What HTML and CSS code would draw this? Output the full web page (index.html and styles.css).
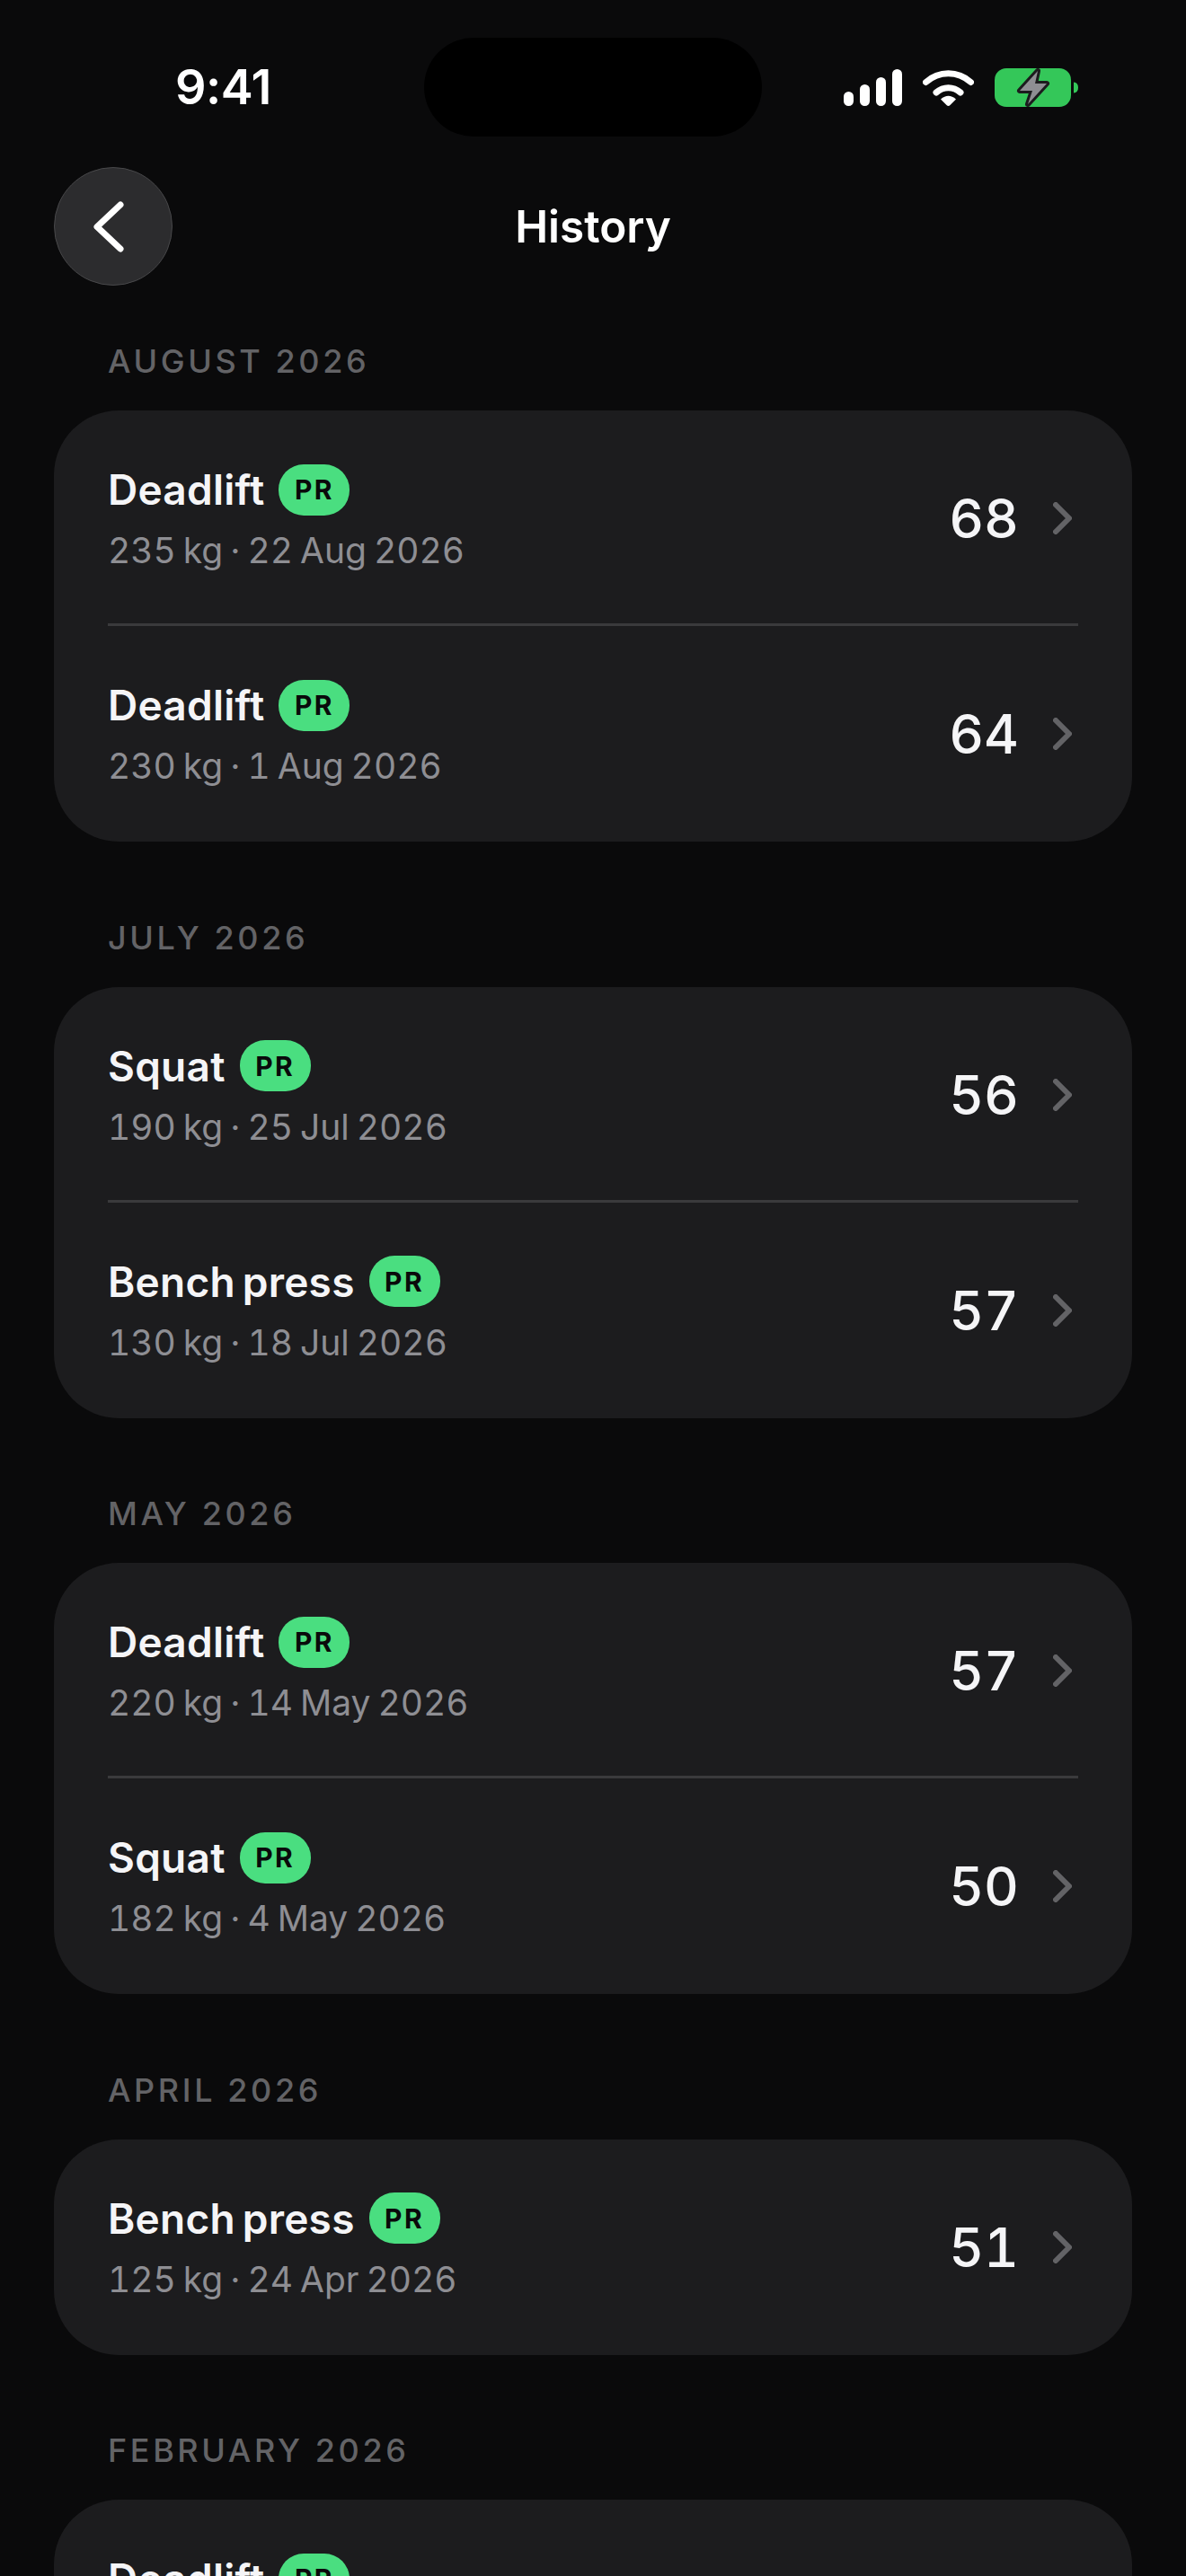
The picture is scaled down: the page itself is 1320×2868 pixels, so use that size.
FILE: index.html
```html
<!DOCTYPE html>
<html lang="en">
<head>
<meta charset="utf-8">
<title>History</title>
<link rel="stylesheet" href="styles.css">
</head>
<body>
<main class="screen">
  <div class="island"></div>
  <header class="status">
    <span class="time">9:41</span>
    <div class="status-icons">
      <svg class="signal" viewBox="0 0 65 41"><rect x="0" y="25" width="11" height="16" rx="5.5"/><rect x="18" y="17" width="11" height="24" rx="5.5"/><rect x="36" y="9" width="11" height="32" rx="5.5"/><rect x="54" y="0" width="11" height="41" rx="5.5"/></svg>
      <svg class="wifi" viewBox="0 0 57 42"><path d="M3.5 15.5C18 2.5 39 2.5 53.5 15.5" fill="none" stroke="#fff" stroke-width="7" stroke-linecap="round"/><path d="M15 27C23 20 34 20 42 27" fill="none" stroke="#fff" stroke-width="7" stroke-linecap="round"/><path d="M20 34.500Q28.500 27 37 34.500L30.500 41Q28.500 43 26.500 41Z" fill="#fff"/></svg>
      <svg class="battery" viewBox="0 0 93 45"><rect x="0" y="1" width="85" height="43" rx="13" fill="#34c759"/><path d="M88 16.500Q93 17 93 22.500Q93 28 88 28.500Z" fill="#34c759"/><path class="bolt" d="M48 4L28 26H42L37 41L58 18H45Z"/></svg>
    </div>
  </header>
  <nav class="nav">
    <button class="back" aria-label="Back"><svg viewBox="0 0 34 57"><path d="M30 4L4 28.500L30 53" fill="none" stroke="#fff" stroke-width="7" stroke-linecap="round" stroke-linejoin="round"/></svg></button>
    <h1 class="title">History</h1>
  </nav>

  <section class="group first">
    <h2 class="month">AUGUST 2026</h2>
    <div class="card">
      <a class="row"><div class="info"><div class="name">Deadlift <span class="pr">PR</span></div><div class="sub">235 kg · 22 Aug 2026</div></div><span class="value">68</span><svg class="chev" viewBox="0 0 21 36"><path d="M3 3L18 18L3 33"/></svg></a>
      <a class="row"><div class="info"><div class="name">Deadlift <span class="pr">PR</span></div><div class="sub">230 kg · 1 Aug 2026</div></div><span class="value">64</span><svg class="chev" viewBox="0 0 21 36"><path d="M3 3L18 18L3 33"/></svg></a>
    </div>
  </section>
  <section class="group">
    <h2 class="month">JULY 2026</h2>
    <div class="card">
      <a class="row"><div class="info"><div class="name">Squat <span class="pr">PR</span></div><div class="sub">190 kg · 25 Jul 2026</div></div><span class="value">56</span><svg class="chev" viewBox="0 0 21 36"><path d="M3 3L18 18L3 33"/></svg></a>
      <a class="row"><div class="info"><div class="name">Bench press <span class="pr">PR</span></div><div class="sub">130 kg · 18 Jul 2026</div></div><span class="value">57</span><svg class="chev" viewBox="0 0 21 36"><path d="M3 3L18 18L3 33"/></svg></a>
    </div>
  </section>
  <section class="group">
    <h2 class="month">MAY 2026</h2>
    <div class="card">
      <a class="row"><div class="info"><div class="name">Deadlift <span class="pr">PR</span></div><div class="sub">220 kg · 14 May 2026</div></div><span class="value">57</span><svg class="chev" viewBox="0 0 21 36"><path d="M3 3L18 18L3 33"/></svg></a>
      <a class="row"><div class="info"><div class="name">Squat <span class="pr">PR</span></div><div class="sub">182 kg · 4 May 2026</div></div><span class="value">50</span><svg class="chev" viewBox="0 0 21 36"><path d="M3 3L18 18L3 33"/></svg></a>
    </div>
  </section>
  <section class="group">
    <h2 class="month">APRIL 2026</h2>
    <div class="card">
      <a class="row"><div class="info"><div class="name">Bench press <span class="pr">PR</span></div><div class="sub">125 kg · 24 Apr 2026</div></div><span class="value">51</span><svg class="chev" viewBox="0 0 21 36"><path d="M3 3L18 18L3 33"/></svg></a>
    </div>
  </section>
  <section class="group">
    <h2 class="month">FEBRUARY 2026</h2>
    <div class="card">
      <a class="row"><div class="info"><div class="name">Deadlift <span class="pr">PR</span></div><div class="sub"></div></div></a>
    </div>
  </section>
</main>
</body>
</html>
```

FILE: styles.css
```css
* { box-sizing: border-box; margin: 0; padding: 0; }
html, body { background: #0a0a0b; }
body { height: 2868px; overflow: hidden; font-family: Inter, "Liberation Sans", sans-serif; color: #f5f5f7; }
.screen { position: relative; width: 1320px; height: 2868px; overflow: hidden; padding: 0 60px; }
.island { position: absolute; left: 472px; top: 42px; width: 376px; height: 110px; border-radius: 55px; background: #000; }
.status { display: flex; justify-content: space-between; align-items: center; height: 150px; padding: 44px 60px 0 135px; }
.time { font-size: 54px; font-weight: 600; line-height: 56px; letter-spacing: -0.5px; color: #fff; }
.status-icons { display: flex; align-items: center; gap: 23px; }
.signal { width: 65px; height: 41px; fill: #fff; }
.wifi { width: 57px; height: 42px; }
.battery { width: 93px; height: 45px; }
.bolt { fill: #8e8e93; stroke: #1c1c1e; stroke-width: 6px; stroke-linejoin: round; paint-order: stroke; }
.nav { position: relative; display: flex; align-items: center; height: 132px; margin-top: 36px; }
.back { width: 132px; height: 132px; border-radius: 50%; background: #2c2c2e; border: 1.500px solid #48484a; display: flex; align-items: center; justify-content: center; }
.back svg { width: 34px; height: 57px; margin-right: 10px; }
.title { position: absolute; left: 0; right: 0; text-align: center; font-size: 49.5px; font-weight: 600; color: #fff; pointer-events: none; }
.group { margin-top: 84.5px; }
.group.first { margin-top: 62px; }
.month { font-size: 36px; font-weight: 500; line-height: 44px; letter-spacing: 3.6px; color: #636366; padding-left: 60px; margin-bottom: 33px; }
.card { background: #1c1c1e; border-radius: 72px; padding: 0 60px; }
.row { position: relative; display: flex; align-items: center; height: 240px; }
.row:not(:last-child)::after { content: ""; position: absolute; left: 0; right: 0; bottom: 0; height: 3px; background: #3a3a3c; }
.info { flex: 1; }
.name { display: flex; align-items: center; gap: 16px; font-size: 46px; font-weight: 600; line-height: 58px; letter-spacing: 0.25px; word-spacing: -4px; color: #f5f5f7; }
.pr { display: inline-flex; align-items: center; justify-content: center; width: 79px; height: 57px; border-radius: 28px; background: #4ade80; color: #0a0a0b; font-size: 30px; font-weight: 700; letter-spacing: 2.5px; }
.sub { min-height: 50px; font-size: 39px; font-weight: 400; line-height: 50px; margin-top: 14px; color: #8e8e93; font-variant-numeric: tabular-nums; word-spacing: -2.5px; }
.value { font-size: 60px; font-weight: 550; color: #f5f5f7; font-variant-numeric: tabular-nums; margin-right: 38px; }
.chev { width: 21px; height: 36px; margin-right: 7px; fill: none; stroke: #636366; stroke-width: 6px; stroke-linecap: round; stroke-linejoin: round; }
```
